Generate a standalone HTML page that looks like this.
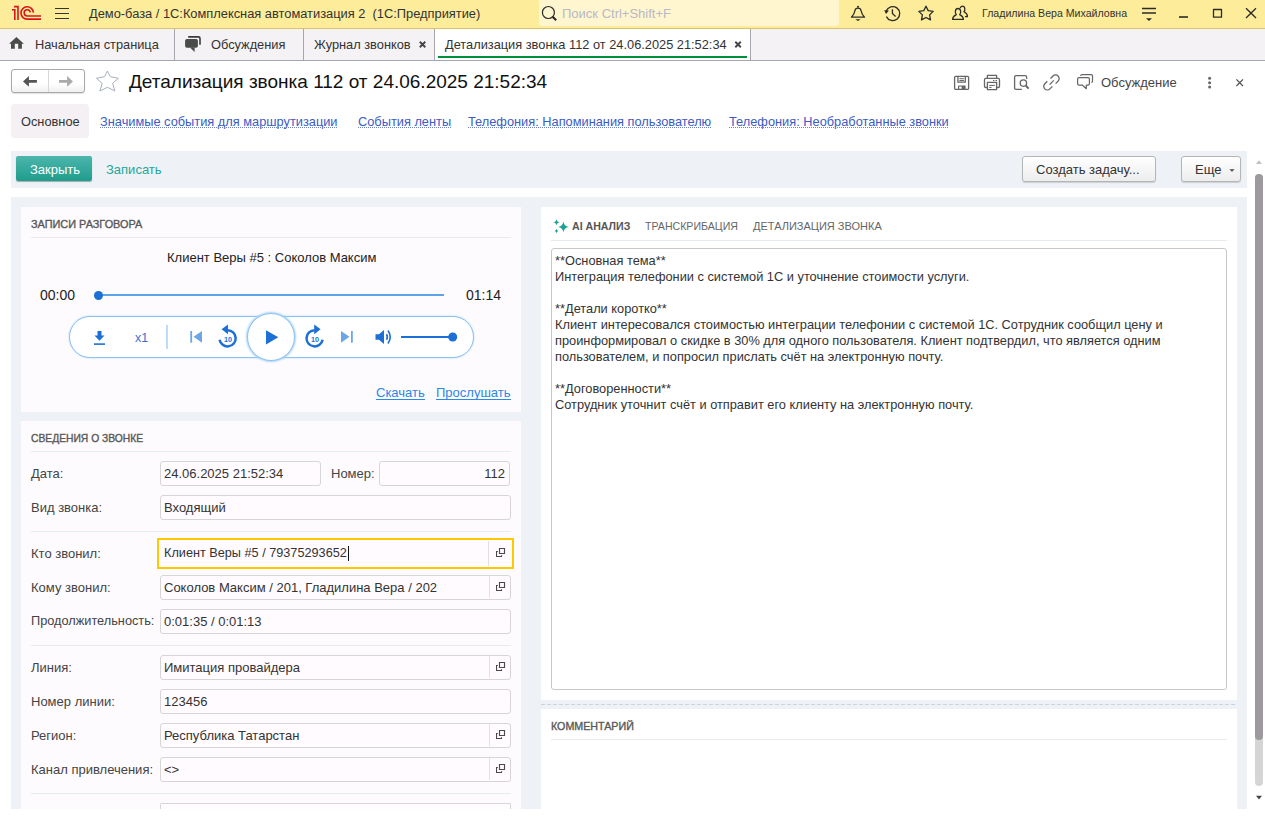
<!DOCTYPE html>
<html><head><meta charset="utf-8">
<style>
*{box-sizing:border-box;margin:0;padding:0}
html,body{width:1265px;height:820px;overflow:hidden;background:#fff;font-family:"Liberation Sans",sans-serif;color:#333}
.a{position:absolute}
.t{white-space:nowrap;line-height:1}
#top{left:0;top:0;width:1265px;height:29px;background:#FDEC9A;border-bottom:1px solid #D9C36A}
#tabs{left:0;top:29px;width:1265px;height:32px;background:#F5F2F5;border-bottom:1px solid #A6A6AE}
.sep{width:1px;background:#A6A6AE}
.lnk{color:#3B5BC2}
.lnk::after{content:"";position:absolute;left:0;right:0;top:11px;height:1px;background:repeating-linear-gradient(90deg,#6C84D0 0 1px,transparent 1px 2px)}
#cmd{left:11px;top:151px;width:1236px;height:37px;background:#EEF2F6}
#main{left:11px;top:197px;width:1236px;height:612px;background:#EEF2F6}
.btn{background:linear-gradient(#fff,#EDEDED);border:1px solid #B5B5B5;border-radius:3px;box-shadow:0 1px 1px rgba(0,0,0,.15)}
.ph{font-size:10.9px;color:#585858;-webkit-text-stroke:0.35px #585858}
.hl{height:1px;background:#E6EBF0}
.lbl{font-size:13px;color:#444}
.inp{background:#FFFBFE;border:1px solid #D6D6D6;border-radius:3px;height:25px}
.itx{font-size:13px;color:#333}
.txt{font-size:12.8px;color:#333;line-height:16px;white-space:pre}
</style></head><body>

<!-- TOP BAR -->
<div id="top" class="a"></div>
<div class="a t" style="left:89px;top:8px;font-size:12.85px;color:#333">Демо-база / 1С:Комплексная автоматизация 2&nbsp; (1С:Предприятие)</div>
<div class="a" style="left:539px;top:0;width:300px;height:26px;background:#FFF5CF;border-radius:0 0 3px 3px"></div>
<div class="a t" style="left:562px;top:7px;font-size:13px;color:#B8B8C8">Поиск Ctrl+Shift+F</div>
<div class="a t" style="left:982px;top:8px;font-size:10.6px;color:#333">Гладилина Вера Михайловна</div>


<svg class="a" style="left:0;top:0" width="1265" height="29" viewBox="0 0 1265 29">
 <g fill="none" stroke="#D7141D" stroke-width="1.6">
  <path d="M14,6.65 H18 V19.9"/>
  <path d="M12,9.75 H14.8 V19.9"/>
  <path d="M33.4,12.6 A6.2,6.2 0 1 0 27.2,19.15 H41"/>
  <path d="M30.3,12.3 A3.1,3.1 0 1 0 27.2,16 H41"/>
 </g>
 <g stroke="#333" stroke-width="1.1">
  <path d="M55,8.5 H69 M55,13.5 H69 M55,18.5 H69"/>
 </g>
 <g fill="none" stroke="#2A2A2A" stroke-width="1.2">
  <circle cx="548.4" cy="12.5" r="6"/>
 </g>
 <path d="M552.6,16.7 L556.2,20.3" stroke="#2A2A2A" stroke-width="2.2"/>
 <g fill="none" stroke="#2A2A2A" stroke-width="1.3" stroke-linejoin="round">
  <path d="M851.5,17.2 C853.5,15 854.5,13.5 854.8,11 C855.2,8.8 856.2,8.2 858,8.2 C859.8,8.2 860.8,8.8 861.2,11 C861.5,13.5 862.5,15 864.5,17.2 Z"/>
  <path d="M886.4,16.6 A7,7 0 1 0 886.2,11"/>
  <path d="M892.4,9.2 V13.6 L895.6,16.4"/>
  <path d="M926,6.2 L928.2,10.6 L933.2,11.4 L929.6,14.9 L930.5,19.9 L926,17.5 L921.5,19.9 L922.4,14.9 L918.8,11.4 L923.8,10.6 Z"/>
  <path d="M952.6,19.4 C952.6,16.5 955,15.4 956.3,14.6 C954.8,13.4 954.8,8.5 958,8.5 C961.2,8.5 961.2,13.4 959.7,14.6 C961,15.4 963.4,16.5 963.4,19.4 Z"/>
  <path d="M960.2,8.2 C960.6,6.6 961.3,6.1 962.4,6.1 C965.4,6.1 965.3,10.5 963.9,11.8 C965.2,12.5 967.6,13.3 967.4,16.6 H965"/>
  <path d="M1142,8.5 H1156 M1142,13 H1156"/>
  <path d="M1213.5,9.5 H1221.5 V17.2 H1213.5 Z"/>
  <path d="M1246,8.2 L1256,18 M1256,8.2 L1246,18"/>
 </g>
 <circle cx="858" cy="6.8" r="1" fill="#2A2A2A"/>
 <path d="M855.3,19.2 H860.7 L858,21 Z" fill="#2A2A2A"/>
 <path d="M884.2,10.2 L889,10.6 L886,14 Z" fill="#2A2A2A"/>
 <path d="M1146,18.3 H1152 L1149,21 Z" fill="#2A2A2A"/>
 <path d="M1179,17 H1188" stroke="#2A2A2A" stroke-width="1.6"/>
</svg>

<!-- TABS -->
<div id="tabs" class="a"></div>
<div class="a" style="left:435px;top:29px;width:315px;height:31px;background:#fff"></div>
<div class="a sep" style="left:174px;top:29px;height:31px"></div>
<div class="a sep" style="left:303px;top:29px;height:31px"></div>
<div class="a sep" style="left:434px;top:29px;height:31px"></div>
<div class="a sep" style="left:750px;top:29px;height:31px"></div>
<div class="a t" style="left:35px;top:39px;font-size:12.8px;color:#333">Начальная страница</div>
<div class="a t" style="left:211px;top:39px;font-size:12.8px;color:#333">Обсуждения</div>
<div class="a t" style="left:314px;top:39px;font-size:12.8px;color:#333">Журнал звонков</div>
<div class="a t" style="left:445px;top:39px;font-size:12.8px;color:#333">Детализация звонка 112 от 24.06.2025 21:52:34</div>
<div class="a" style="left:438px;top:56px;width:309px;height:2px;background:#00913A"></div>


<svg class="a" style="left:0;top:29px" width="1265" height="70" viewBox="0 29 1265 70">
 <path d="M9.1,43.7 L16.4,37 L23.9,43.7 H21.9 V48.8 H18.2 V43.7 H14.8 V48.8 H11 V43.7 Z" fill="#4A4C4A"/>
 <rect x="185.1" y="39" width="12.8" height="8.8" rx="1.8" fill="#4A4C4A"/>
 <path d="M190,47.5 L194.6,51.9 L194.6,47.5 Z" fill="#4A4C4A"/>
 <path d="M188.2,36.9 H198.5 Q200,36.9 200,38.4 V44.8" fill="none" stroke="#3A3C3A" stroke-width="1.6"/>
 <g stroke="#444" stroke-width="1.9">
  <path d="M419.8,41.8 L425.3,47.2 M425.3,41.8 L419.8,47.2"/>
  <path d="M735.3,41.8 L740.8,47.2 M740.8,41.8 L735.3,47.2"/>
 </g>
</svg>

<!-- TITLE -->
<div class="a" style="left:11px;top:69px;width:74px;height:24px;border:1px solid #A8A8A8;border-radius:3px;background:linear-gradient(#fff 60%,#F0F0F0);box-shadow:0 1px 1px rgba(0,0,0,.12)"></div>
<div class="a" style="left:48px;top:70px;width:1px;height:22px;background:#D8D8D8"></div>
<svg class="a" style="left:0;top:60px" width="1265" height="40" viewBox="0 60 1265 40">
 <path d="M23,81.4 L28.9,76.1 V80.1 H36.9 V82.8 H28.9 V86.8 Z" fill="#555"/>
 <path d="M73,81.4 L67.1,76.1 V80.1 H59 V82.8 H67.1 V86.8 Z" fill="#AAA"/>
 <path d="M107.4,71 L110.2,76.6 L118.4,78.3 L112.6,83.3 L114.9,91 L107.4,87.3 L99.9,91 L102.2,83.3 L96.4,78.3 L104.6,76.6 Z" fill="none" stroke="#A7B0BC" stroke-width="1"/>
</svg>

<div class="a t" style="left:129px;top:72px;font-size:19px;color:#111">Детализация звонка 112 от 24.06.2025 21:52:34</div>
<div class="a t" style="left:1101px;top:76px;font-size:13px;color:#444">Обсуждение</div>

<!-- NAV -->
<div class="a" style="left:11px;top:104px;width:78px;height:34px;background:#F4F0F4;border-radius:4px"></div>
<div class="a t" style="left:21px;top:116px;font-size:12.8px;color:#333">Основное</div>
<div class="a t lnk" style="left:100px;top:116px;font-size:12.8px">Значимые события для маршрутизации</div>
<div class="a t lnk" style="left:358px;top:116px;font-size:12.8px">События ленты</div>
<div class="a t lnk" style="left:468px;top:116px;font-size:12.8px">Телефония: Напоминания пользователю</div>
<div class="a t lnk" style="left:729px;top:116px;font-size:12.8px">Телефония: Необработанные звонки</div>

<!-- CMD -->
<div id="cmd" class="a"></div>
<div class="a" style="left:16px;top:156px;width:76px;height:25px;border-radius:2px;background:linear-gradient(#4DB6AC,#1E9C8C);box-shadow:0 1px 1px rgba(0,0,0,.3)"></div>
<div class="a t" style="left:30px;top:163px;font-size:13px;color:#fff">Закрыть</div>
<div class="a t" style="left:106px;top:163px;font-size:13px;color:#26A69A">Записать</div>
<div class="a btn" style="left:1022px;top:156px;width:134px;height:26px"></div>
<div class="a t" style="left:1036px;top:163px;font-size:13px;color:#333">Создать задачу...</div>
<div class="a btn" style="left:1181px;top:156px;width:60px;height:26px"></div>
<div class="a t" style="left:1195px;top:163px;font-size:13px;color:#333">Еще</div>

<!-- MAIN -->
<div id="main" class="a"></div>
<div class="a" style="left:21px;top:207px;width:500px;height:205px;background:#FEFBFE"></div>
<div class="a" style="left:21px;top:421px;width:500px;height:388px;background:#FEFBFE"></div>
<div class="a" style="left:541px;top:207px;width:696px;height:493px;background:#fff"></div>
<div class="a" style="left:541px;top:709px;width:696px;height:100px;background:#fff"></div>


<!-- LEFT PANEL 1 -->
<div class="a t ph" style="left:31px;top:219px">ЗАПИСИ РАЗГОВОРА</div>
<div class="a hl" style="left:31px;top:237px;width:480px"></div>
<div class="a t" style="left:167px;top:251px;font-size:13px;color:#222">Клиент Веры #5 : Соколов Максим</div>
<div class="a t" style="left:40px;top:288px;font-size:14px;color:#222">00:00</div>
<div class="a t" style="left:466px;top:288px;font-size:14px;color:#222">01:14</div>
<div class="a" style="left:98px;top:294px;width:346px;height:2px;background:#5EA2E8"></div>
<div class="a" style="left:93.5px;top:290.5px;width:9px;height:9px;border-radius:50%;background:#1B6FD5"></div>
<div class="a" style="left:69px;top:316px;width:405px;height:42px;border-radius:21px;border:1px solid #8CC2F2;box-shadow:0 0 2px #A9D3F7;background:#fff"></div>
<div class="a" style="left:247px;top:313px;width:48px;height:48px;border-radius:50%;border:1px solid #8CC2F2;box-shadow:0 0 2px 1px #A9D3F7;background:#fff"></div>
<div class="a" style="left:166px;top:325px;width:2px;height:24px;background:#BCDDF8"></div>
<div class="a t" style="left:135px;top:332px;font-size:12.4px;color:#3C6FD2">x1</div>
<svg class="a" style="left:60px;top:300px" width="440" height="80" viewBox="60 300 440 80">
 <g fill="#1B6FD5">
  <path d="M97.5,331 H101.5 V335.5 H104.5 L99.5,340.8 L94.5,335.5 H97.5 Z"/>
  <rect x="94" y="343.3" width="11" height="1.6"/>
  <path d="M266,330.2 L278.3,337.3 L266,344.5 Z"/>
 </g>
 <g fill="#6CA6E6">
  <rect x="190.3" y="331" width="1.8" height="11.7"/>
  <path d="M202,331 V342.7 L193.5,336.85 Z"/>
  <path d="M341,331 V342.7 L349.5,336.85 Z"/>
  <rect x="351" y="331" width="1.8" height="11.7"/>
 </g>
 <g fill="none" stroke="#1B6FD5" stroke-width="2.5">
  <path d="M227.6,330.2 A8.1,8.1 0 1 1 219.6,339.7"/>
  <path d="M314.6,330.2 A8.1,8.1 0 1 0 322.6,339.7"/>
 </g>
 <g fill="#1B6FD5">
  <path d="M221.6,329.3 L228,324.4 V334.3 Z"/>
  <path d="M320.6,329.3 L314.2,324.4 V334.3 Z"/>
 </g>
 <g font-family="Liberation Sans" font-weight="bold" font-size="7.2" fill="#1B6FD5" text-anchor="middle">
  <text x="227.9" y="342.3">10</text>
  <text x="314.9" y="342.3">10</text>
 </g>
 <path d="M375.5,334.3 H379 L384,330 V344 L379,339.7 H375.5 Z" fill="#1B6FD5"/>
 <path d="M386.5,334.2 Q388.3,337 386.5,339.8" fill="none" stroke="#1B6FD5" stroke-width="1.6"/>
 <path d="M388,330.5 Q392.5,337 388,343.5" fill="none" stroke="#1B6FD5" stroke-width="1.6"/>
 <rect x="401" y="336" width="53" height="2" fill="#1B6FD5"/>
 <circle cx="452.7" cy="337" r="4.5" fill="#1B6FD5"/>
</svg>
<div class="a t" style="left:376px;top:386px;font-size:13px;color:#2B88E5;border-bottom:1px solid #2B88E5;padding-bottom:0">Скачать</div>
<div class="a t" style="left:436px;top:386px;font-size:13px;color:#2B88E5;border-bottom:1px solid #2B88E5;padding-bottom:0">Прослушать</div>


<!-- LEFT PANEL 2 -->
<div class="a t ph" style="left:31px;top:434px;font-size:10.3px">СВЕДЕНИЯ О ЗВОНКЕ</div>
<div class="a hl" style="left:31px;top:451px;width:480px"></div>
<div class="a t lbl" style="left:31px;top:467px">Дата:</div>
<div class="a inp" style="left:160px;top:461px;width:161px"></div>
<div class="a t itx" style="left:164px;top:467px">24.06.2025 21:52:34</div>
<div class="a t lbl" style="left:331px;top:467px">Номер:</div>
<div class="a inp" style="left:379px;top:461px;width:131px"></div>
<div class="a t itx" style="right:760px;top:467px">112</div>
<div class="a t lbl" style="left:31px;top:501px">Вид звонка:</div>
<div class="a inp" style="left:160px;top:495px;width:351px"></div>
<div class="a t itx" style="left:164px;top:501px">Входящий</div>
<div class="a hl" style="left:31px;top:531px;width:480px"></div>
<div class="a t lbl" style="left:31px;top:547px">Кто звонил:</div>
<div class="a" style="left:157px;top:538px;width:357px;height:31px;border:2px solid #FFC800;background:#FFFBFE"></div>
<div class="a" style="left:488px;top:541px;width:1px;height:25px;background:#E0E0E0"></div>
<div class="a t itx" style="left:164px;top:547px;font-size:12.7px">Клиент Веры #5 / 79375293652</div>
<div class="a" style="left:348px;top:546px;width:1px;height:15px;background:#111"></div>
<svg class="a" style="left:496px;top:548px" width="10" height="10" viewBox="0 0 10 10"><path d="M3.5,0.5 H8.5 V5.5 H3.5 Z M1.8,3.5 H0.5 V8.5 H5.5 V7.2" fill="none" stroke="#4A4A4A" stroke-width="1.15"/></svg>
<div class="a t lbl" style="left:31px;top:581px">Кому звонил:</div>
<div class="a inp" style="left:160px;top:575px;width:351px"></div>
<div class="a t itx" style="left:164px;top:581px">Соколов Максим / 201, Гладилина Вера / 202</div>
<div class="a" style="left:489px;top:576px;width:1px;height:22px;background:#E3E3E3"></div>
<svg class="a" style="left:496px;top:582px" width="10" height="10" viewBox="0 0 10 10"><path d="M3.5,0.5 H8.5 V5.5 H3.5 Z M1.8,3.5 H0.5 V8.5 H5.5 V7.2" fill="none" stroke="#4A4A4A" stroke-width="1.15"/></svg>
<div class="a t lbl" style="left:31px;top:615px;font-size:12.75px">Продолжительность:</div>
<div class="a inp" style="left:160px;top:609px;width:351px"></div>
<div class="a t itx" style="left:164px;top:615px">0:01:35 / 0:01:13</div>
<div class="a hl" style="left:31px;top:645px;width:480px"></div>
<div class="a t lbl" style="left:31px;top:661px">Линия:</div>
<div class="a inp" style="left:160px;top:655px;width:351px"></div>
<div class="a t itx" style="left:164px;top:661px">Имитация провайдера</div>
<div class="a" style="left:489px;top:656px;width:1px;height:22px;background:#E3E3E3"></div>
<svg class="a" style="left:496px;top:662px" width="10" height="10" viewBox="0 0 10 10"><path d="M3.5,0.5 H8.5 V5.5 H3.5 Z M1.8,3.5 H0.5 V8.5 H5.5 V7.2" fill="none" stroke="#4A4A4A" stroke-width="1.15"/></svg>
<div class="a t lbl" style="left:31px;top:695px">Номер линии:</div>
<div class="a inp" style="left:160px;top:689px;width:351px"></div>
<div class="a t itx" style="left:164px;top:695px">123456</div>
<div class="a t lbl" style="left:31px;top:729px">Регион:</div>
<div class="a inp" style="left:160px;top:723px;width:351px"></div>
<div class="a t itx" style="left:164px;top:729px">Республика Татарстан</div>
<div class="a" style="left:489px;top:724px;width:1px;height:22px;background:#E3E3E3"></div>
<svg class="a" style="left:496px;top:730px" width="10" height="10" viewBox="0 0 10 10"><path d="M3.5,0.5 H8.5 V5.5 H3.5 Z M1.8,3.5 H0.5 V8.5 H5.5 V7.2" fill="none" stroke="#4A4A4A" stroke-width="1.15"/></svg>
<div class="a t lbl" style="left:31px;top:763px">Канал привлечения:</div>
<div class="a inp" style="left:160px;top:757px;width:351px"></div>
<div class="a t itx" style="left:164px;top:763px">&lt;&gt;</div>
<div class="a" style="left:489px;top:758px;width:1px;height:22px;background:#E3E3E3"></div>
<svg class="a" style="left:496px;top:764px" width="10" height="10" viewBox="0 0 10 10"><path d="M3.5,0.5 H8.5 V5.5 H3.5 Z M1.8,3.5 H0.5 V8.5 H5.5 V7.2" fill="none" stroke="#4A4A4A" stroke-width="1.15"/></svg>
<div class="a hl" style="left:31px;top:793px;width:480px"></div>
<div class="a inp" style="left:160px;top:803px;width:351px;height:6px;border-bottom:none;border-radius:2px 2px 0 0"></div>


<!-- RIGHT PANEL -->
<svg class="a" style="left:548px;top:214px" width="28" height="24" viewBox="548 214 28 24">
 <path d="M563.4,221.5 Q564.14,226.14 568.6999999999999,226.9 Q564.14,227.66 563.4,232.3 Q562.66,227.66 558.1,226.9 Q562.66,226.14 563.4,221.5 Z M556.5,218.9 Q556.86,221.96 560.1,222.3 Q556.86,222.64 556.5,225.70000000000002 Q556.14,222.64 552.9,222.3 Q556.14,221.96 556.5,218.9 Z M556.5,228.8 Q556.88,230.56 558.4,231 Q556.88,231.44 556.5,233.2 Q556.12,231.44 554.6,231 Q556.12,230.56 556.5,228.8 Z" fill="#1FA196"/>
</svg>
<div class="a t" style="left:572px;top:221px;font-size:10.6px;font-weight:bold;color:#555">AI АНАЛИЗ</div>
<div class="a t" style="left:645px;top:221px;font-size:10.6px;color:#666">ТРАНСКРИБАЦИЯ</div>
<div class="a t" style="left:753px;top:221px;font-size:11px;color:#666">ДЕТАЛИЗАЦИЯ ЗВОНКА</div>
<div class="a hl" style="left:551px;top:240px;width:676px"></div>
<div class="a" style="left:551px;top:248px;width:676px;height:442px;border:1px solid #C8C8C8;border-radius:3px;background:#fff"></div>
<div class="a txt" style="left:555px;top:253px">**Основная тема**
Интеграция телефонии с системой 1С и уточнение стоимости услуги.

**Детали коротко**
Клиент интересовался стоимостью интеграции телефонии с системой 1С. Сотрудник сообщил цену и
проинформировал о скидке в 30% для одного пользователя. Клиент подтвердил, что является одним
пользователем, и попросил прислать счёт на электронную почту.

**Договоренности**
Сотрудник уточнит счёт и отправит его клиенту на электронную почту.</div>
<svg class="a" style="left:541px;top:704px" width="696" height="1"><line x1="0" y1="0.5" x2="696" y2="0.5" stroke="#CBD3DC" stroke-width="1" stroke-dasharray="4 2"/></svg>
<div class="a t ph" style="left:551px;top:721px;font-size:10.7px">КОММЕНТАРИЙ</div>
<div class="a hl" style="left:551px;top:739px;width:676px"></div>

<!-- SCROLLBAR -->
<div class="a" style="left:1255px;top:174px;width:8px;height:612px;border-radius:4px;background:#D5D5D5"></div>
<div class="a" style="left:1255px;top:174px;width:8px;height:566px;border-radius:4px;background:#9C9A9C"></div>
<svg class="a" style="left:1253px;top:155px" width="12" height="655" viewBox="1253 155 12 655">
 <path d="M1256,164 H1262 L1259,160.3 Z" fill="#C0C0C0"/>
 <path d="M1256,795.8 H1262 L1259,799.5 Z" fill="#444"/>
</svg>

<!-- TITLE ICONS -->
<svg class="a" style="left:940px;top:65px" width="320" height="35" viewBox="940 65 320 35">
 <g fill="none" stroke="#666" stroke-width="1.3" stroke-linejoin="round">
  <rect x="954.6" y="76.4" width="14" height="13" rx="1.2"/>
  <path d="M957.9,76.4 V82.2 H965.3 V76.4"/>
  <path d="M959.4,78.7 H963.9 M959.4,80.5 H963.9" stroke-width="1"/>
  <path d="M958.6,89.4 V86 H965 V89.4" stroke-width="1.2"/>
  <path d="M987.4,78.4 V75.4 H996.6 V78.4"/>
  <path d="M987.4,87.5 H985.8 Q984.5,87.5 984.5,86.2 V79.7 Q984.5,78.4 985.8,78.4 H998.2 Q999.5,78.4 999.5,79.7 V86.2 Q999.5,87.5 998.2,87.5 H996.6"/>
  <rect x="987.4" y="82.4" width="9.2" height="7.2" fill="#fff"/>
  <path d="M989.2,85.4 H994.8 M989.2,87.4 H991.6 M993,80.5 H994.4 M995.6,80.5 H997" stroke-width="1"/>
  <path d="M1021.8,89.4 H1016 Q1014.6,89.4 1014.6,88 V77 Q1014.6,75.6 1016,75.6 H1025.2 Q1026.6,75.6 1026.6,77 V79"/>
  <circle cx="1023.4" cy="83.1" r="3.2"/>
  <path d="M1050.5,78.5 L1053,76 A3.6,3.6 0 0 1 1058.1,81.1 L1055.6,83.6"/>
  <path d="M1052.4,86.4 L1049.9,88.9 A3.6,3.6 0 0 1 1044.8,83.8 L1047.3,81.3"/>
  <path d="M1049.6,84.6 L1053.8,80.4"/>
  <path d="M1080.5,75.9 Q1080.8,74.6 1082,74.6 H1091.2 Q1092.5,74.6 1092.5,75.9 V81.2 Q1092.5,82.3 1091.3,82.5" stroke-width="1.2"/>
  <path d="M1079,77.6 H1088 Q1089.4,77.6 1089.4,79 V83.8 Q1089.4,85.2 1088,85.2 H1086.3 V88.7 L1082.5,85.2 H1079 Q1077.6,85.2 1077.6,83.8 V79 Q1077.6,77.6 1079,77.6 Z" stroke-width="1.2"/>
  <path d="M1236.4,79.4 L1243,86 M1243,79.4 L1236.4,86" stroke="#555"/>
 </g>
 <rect x="961.6" y="86" width="3.4" height="3.4" fill="#666"/>
 <path d="M1025.6,85.4 L1028.6,88.6" stroke="#666" stroke-width="2"/>
 <circle cx="996.5" cy="80.9" r="0.1" fill="#666"/>
 <g fill="#666">
  <circle cx="1209.6" cy="78.3" r="1.5"/>
  <circle cx="1209.6" cy="82.7" r="1.5"/>
  <circle cx="1209.6" cy="87.1" r="1.5"/>
 </g>
</svg>
<svg class="a" style="left:1225px;top:165px" width="12" height="10" viewBox="0 0 12 10"><path d="M4.4,4.3 H9.6 L7,6.8 Z" fill="#444"/></svg>

</body></html>
